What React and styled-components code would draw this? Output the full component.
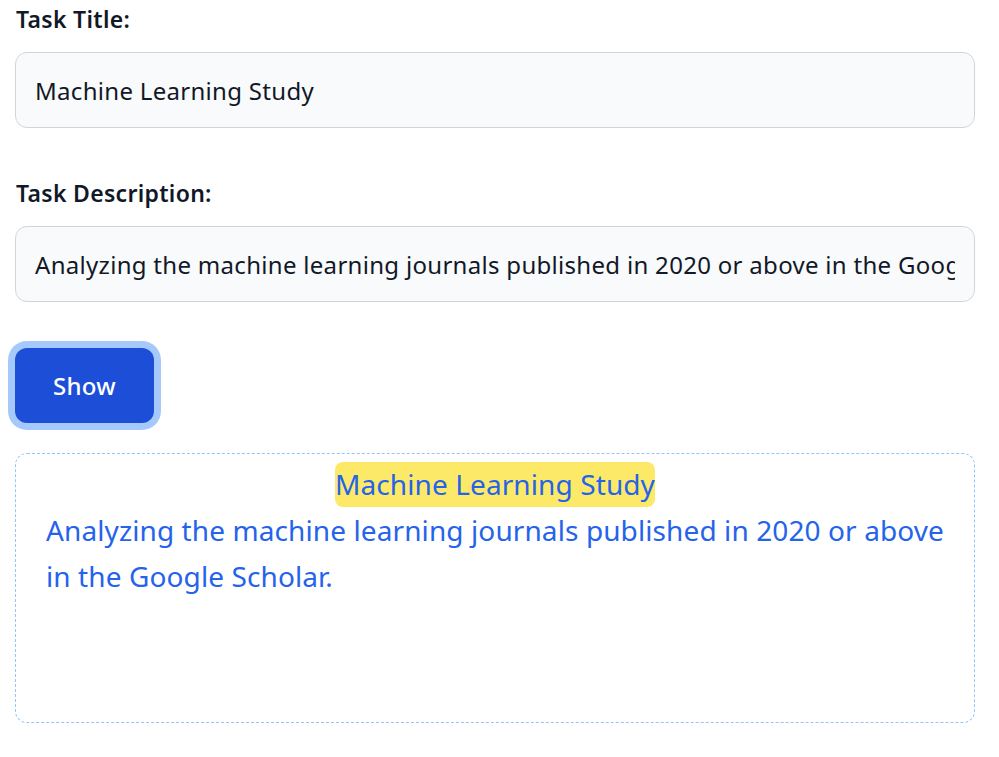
import React, { useState } from "react";
import styled, { createGlobalStyle } from "styled-components";

const GlobalStyle = createGlobalStyle`
  body {
    margin: 0;
    background: #ffffff;
    font-family: "Segoe UI", "Noto Sans", "Open Sans", sans-serif;
  }
`;

const Page = styled.div`
  padding: 3px 24px 0 15px;
  display: flex;
  flex-direction: column;
`;

const Field = styled.div`
  display: flex;
  flex-direction: column;
  gap: 16px;
  margin-bottom: ${(p) => p.$gap || 0}px;
`;

const Label = styled.label`
  padding-left: 1px;
  font-size: 23px;
  line-height: 33px;
  font-weight: 600;
  letter-spacing: 0.3px;
  color: #111827;
`;

const Input = styled.input`
  box-sizing: border-box;
  width: 100%;
  height: 76px;
  padding: 0 19px;
  border: 1px solid #d1d5db;
  border-radius: 12px;
  background: #f9fafb;
  font-family: inherit;
  font-size: 24px;
  letter-spacing: 0.3px;
  color: #111827;
  outline: none;
`;

const ButtonRow = styled.div`
  display: flex;
  margin: 46px 0 30px;
`;

const ShowButton = styled.button`
  height: 75px;
  padding: 0 38px;
  border: none;
  border-radius: 12px;
  background: #1d4ed8;
  color: #ffffff;
  font-family: inherit;
  font-size: 24px;
  font-weight: 500;
  letter-spacing: 0.3px;
  box-shadow: 0 0 0 7px #a6c9fc;
  cursor: pointer;
`;

const Output = styled.div`
  box-sizing: border-box;
  height: 270px;
  padding: 8px 26px 8px 30px;
  border: 1px dashed #93c5fd;
  border-radius: 12px;
  color: #2563eb;
  font-size: 28px;
  line-height: 46px;
  letter-spacing: 0.1px;
`;

const TitleLine = styled.div`
  text-align: center;
  line-height: 45px;
  padding-right: 4px;
`;

const Highlight = styled.span`
  display: inline-block;
  padding: 0;
  border-radius: 8px;
  background: #fde968;
`;

const Description = styled.p`
  margin: 0;
`;

export default function App() {
  const [title, setTitle] = useState("Machine Learning Study");
  const [desc, setDesc] = useState(
    "Analyzing the machine learning journals published in 2020 or above in the Google Scholar."
  );

  return (
    <>
      <GlobalStyle />
      <Page>
        <Field $gap={49}>
          <Label>Task Title:</Label>
          <Input value={title} onChange={(e) => setTitle(e.target.value)} />
        </Field>
        <Field>
          <Label>Task Description:</Label>
          <Input value={desc} onChange={(e) => setDesc(e.target.value)} />
        </Field>
        <ButtonRow>
          <ShowButton>Show</ShowButton>
        </ButtonRow>
        <Output>
          <TitleLine>
            <Highlight>{title}</Highlight>
          </TitleLine>
          <Description>{desc}</Description>
        </Output>
      </Page>
    </>
  );
}
